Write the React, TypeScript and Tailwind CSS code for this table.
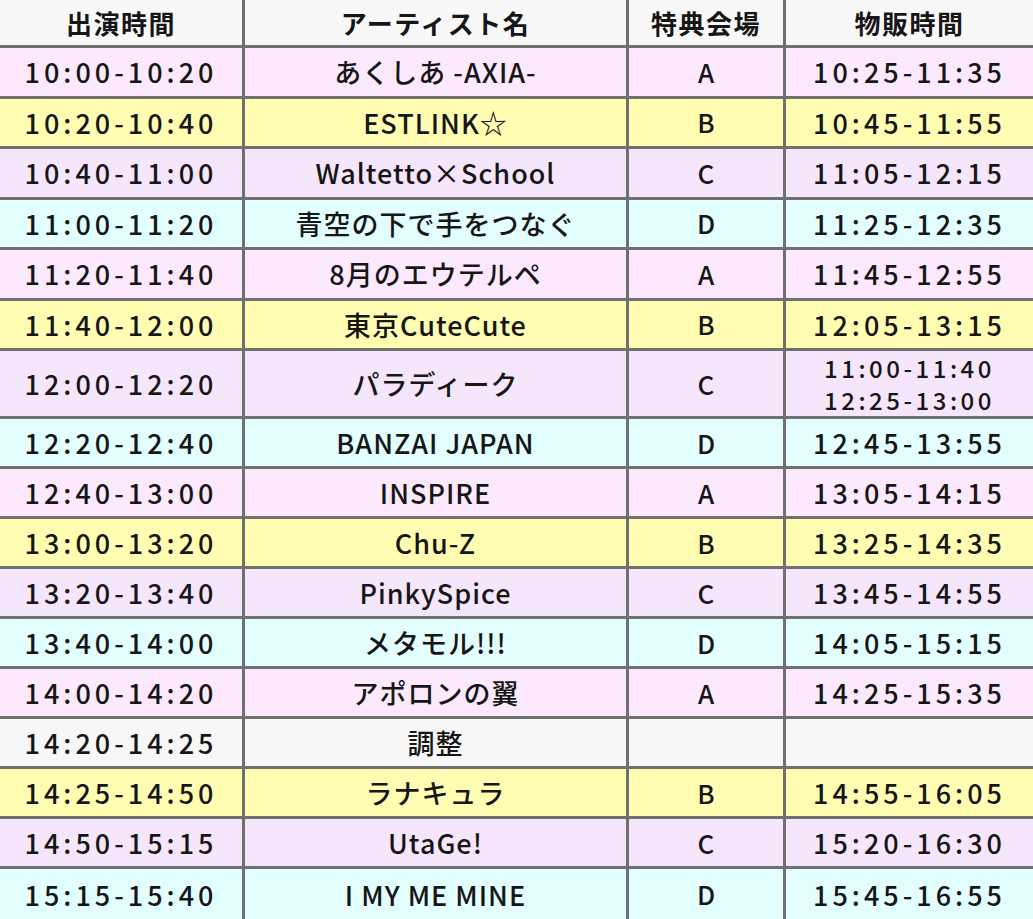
const rows = [
  { time: "10:00-10:20", name: "あくしあ -AXIA-", place: "A", sale: ["10:25-11:35"], bg: "bg-[#fde9fd]", h: "h-[50.5px]" },
  { time: "10:20-10:40", name: "ESTLINK☆", place: "B", sale: ["10:45-11:55"], bg: "bg-[#fffdb2]", h: "h-[50.5px]" },
  { time: "10:40-11:00", name: "Waltetto×School", place: "C", sale: ["11:05-12:15"], bg: "bg-[#f6e6fb]", h: "h-[50.5px]" },
  { time: "11:00-11:20", name: "青空の下で手をつなぐ", place: "D", sale: ["11:25-12:35"], bg: "bg-[#e2fefe]", h: "h-[50.5px]" },
  { time: "11:20-11:40", name: "8月のエウテルペ", place: "A", sale: ["11:45-12:55"], bg: "bg-[#fde9fd]", h: "h-[50.5px]" },
  { time: "11:40-12:00", name: "東京CuteCute", place: "B", sale: ["12:05-13:15"], bg: "bg-[#fffdb2]", h: "h-[50.5px]" },
  { time: "12:00-12:20", name: "パラディーク", place: "C", sale: ["11:00-11:40", "12:25-13:00"], bg: "bg-[#f6e6fb]", h: "h-[68px]" },
  { time: "12:20-12:40", name: "BANZAI JAPAN", place: "D", sale: ["12:45-13:55"], bg: "bg-[#e2fefe]", h: "h-[50px]" },
  { time: "12:40-13:00", name: "INSPIRE", place: "A", sale: ["13:05-14:15"], bg: "bg-[#fde9fd]", h: "h-[50px]" },
  { time: "13:00-13:20", name: "Chu-Z", place: "B", sale: ["13:25-14:35"], bg: "bg-[#fffdb2]", h: "h-[50px]" },
  { time: "13:20-13:40", name: "PinkySpice", place: "C", sale: ["13:45-14:55"], bg: "bg-[#f6e6fb]", h: "h-[50px]" },
  { time: "13:40-14:00", name: "メタモル!!!", place: "D", sale: ["14:05-15:15"], bg: "bg-[#e2fefe]", h: "h-[50px]" },
  { time: "14:00-14:20", name: "アポロンの翼", place: "A", sale: ["14:25-15:35"], bg: "bg-[#fde9fd]", h: "h-[50px]" },
  { time: "14:20-14:25", name: "調整", place: "", sale: [], bg: "bg-[#f7f7f7]", h: "h-[50px]" },
  { time: "14:25-14:50", name: "ラナキュラ", place: "B", sale: ["14:55-16:05"], bg: "bg-[#fffdb2]", h: "h-[50px]" },
  { time: "14:50-15:15", name: "UtaGe!", place: "C", sale: ["15:20-16:30"], bg: "bg-[#f6e6fb]", h: "h-[50px]" },
  { time: "15:15-15:40", name: "I MY ME MINE", place: "D", sale: ["15:45-16:55"], bg: "bg-[#e2fefe]", h: "h-[50px]" },
];

const cell = "flex flex-col items-center justify-center border-r-[3px] border-[#707070]";

export default function App() {
  return (
    <div className="w-[1033px] h-[919px] overflow-hidden bg-white text-[#161616] font-['Noto_Sans_CJK_JP','Noto_Sans',sans-serif] font-medium">
      {/* header */}
      <div className="grid grid-cols-[245px_384px_157px_1fr] h-[48px] border-b-[3px] border-[#707070] bg-[#f8f8f8] text-[26px] tracking-[1.5px] font-bold">
        <div className={cell}>出演時間</div>
        <div className={cell}>アーティスト名</div>
        <div className={cell}>特典会場</div>
        <div className="flex items-center justify-center">物販時間</div>
      </div>

      {rows.map((r, i) => (
        <div
          key={r.time}
          className={`grid grid-cols-[245px_384px_157px_1fr] ${i === rows.length - 1 ? "" : "border-b-[3px] border-[#707070]"} ${r.bg} ${r.h}`}
        >
          <div className={`${cell} text-[27px] tracking-[4px] leading-none`}>{r.time}</div>
          <div className={`${cell} text-[27px] tracking-[1px] leading-none`}>{r.name}</div>
          <div className={`${cell} text-[26px] leading-none`}>{r.place}</div>
          <div className="flex flex-col items-center justify-center leading-none">
            {r.sale.length > 1
              ? r.sale.map((s) => (
                  <span key={s} className="text-[24px] tracking-[3.5px] leading-[32px]">
                    {s}
                  </span>
                ))
              : r.sale.map((s) => (
                  <span key={s} className="text-[27px] tracking-[4px]">
                    {s}
                  </span>
                ))}
          </div>
        </div>
      ))}
    </div>
  );
}
